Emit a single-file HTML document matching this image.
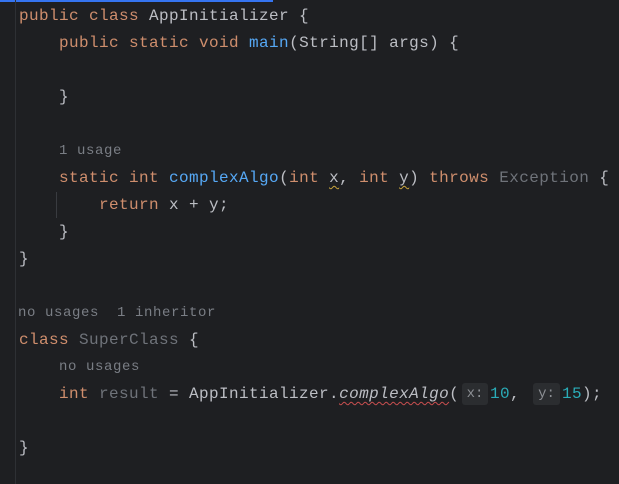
<!DOCTYPE html>
<html><head><meta charset="utf-8"><style>
html,body{margin:0;padding:0;width:619px;height:484px;overflow:hidden;background:#1e1f22}
.top{position:absolute;left:0;top:0;width:273px;height:2px;background:#3574f0}
.gut{position:absolute;left:15px;top:0;width:1px;height:484px;background:#2e3034}
.ig{position:absolute;left:56px;top:192px;width:1px;height:26px;background:#393b40}
.l{position:absolute;left:19px;height:27px;line-height:27px;font-family:"Liberation Mono",monospace;font-size:16px;letter-spacing:0.4px;color:#bcbec4;white-space:pre}
.k{color:#cf8e6d}.f{color:#56a8f5}.g{color:#6f737a}.n{color:#2aacb8}
.h{font-size:14px;letter-spacing:0.6px;color:#7a7e85}
.w{text-decoration:underline wavy #c9a43c;text-underline-offset:3px;text-decoration-thickness:1px}
.r{text-decoration:underline wavy #c94f4f;text-underline-offset:3px;text-decoration-thickness:1px;font-style:italic}
.box{position:absolute;top:383px;height:22px;line-height:22px;background:#2b2d30;border-radius:3px;color:#8c8f94;font-family:"Liberation Mono",monospace;font-size:14px;text-align:center}
</style></head><body>
<div class="top"></div><div class="gut"></div><div class="ig"></div>
<div class="l" style="top:3px"><span class="k">public class </span>AppInitializer {</div>
<div class="l" style="top:30px"><span class="k">    public static void </span><span class="f">main</span>(String[] args) {</div>
<div class="l" style="top:84px">    }</div>
<div class="l h" style="top:138px;left:59px">1 usage</div>
<div class="l" style="top:165px"><span class="k">    static int </span><span class="f">complexAlgo</span>(<span class="k">int </span><span class="w">x</span>, <span class="k">int </span><span class="w">y</span>) <span class="k">throws </span><span class="g">Exception</span> {</div>
<div class="l" style="top:192px"><span class="k">        return </span>x + y;</div>
<div class="l" style="top:219px">    }</div>
<div class="l" style="top:246px">}</div>
<div class="l h" style="top:300px;left:18px">no usages  1 inheritor</div>
<div class="l" style="top:327px"><span class="k">class </span><span class="g">SuperClass</span> {</div>
<div class="l h" style="top:354px;left:59px">no usages</div>
<div class="l" style="top:381px"><span class="k">    int </span><span class="g">result</span> = AppInitializer.<span class="r">complexAlgo</span>(</div>
<div class="box" style="left:462px;width:26px">x:</div>
<div class="l" style="top:381px;left:490px"><span class="n">10</span>,</div>
<div class="box" style="left:533px;width:27px">y:</div>
<div class="l" style="top:381px;left:562px"><span class="n">15</span>);</div>
<div class="l" style="top:435px">}</div>
</body></html>
